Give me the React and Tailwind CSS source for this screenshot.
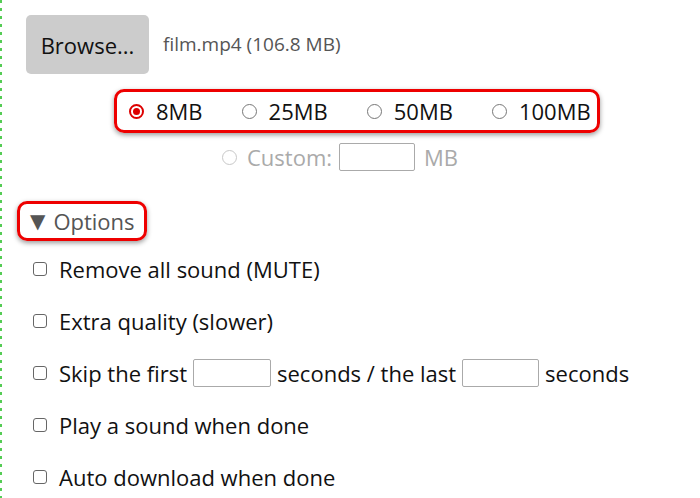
import React from "react";

function Radio({ checked, disabled }) {
  return (
    <span
      className={`inline-flex shrink-0 w-[15px] h-[15px] rounded-full items-center justify-center border ${
        checked ? "border-[#d00] border-2" : disabled ? "border-[#c8c8c8]" : "border-[#777]"
      } bg-white`}
    >
      {checked && <span className="w-[7px] h-[7px] rounded-full bg-[#d00]" />}
    </span>
  );
}

function Check() {
  return <span className="inline-block shrink-0 w-[14px] h-[14px] rounded-[3px] border border-[#666] bg-white" />;
}

function Input({ w }) {
  return <span className={`inline-block shrink-0 ${w} h-[28px] border border-[#aaa] rounded-[2px] bg-white`} />;
}

export default function App() {
  return (
    <div
      className="w-[700px] h-[498px] bg-white overflow-hidden flex text-[22px] text-[#111] leading-none"
      style={{ fontFamily: '"Open Sans", sans-serif' }}
    >
      <div className="w-[2px] shrink-0 h-full bg-[repeating-linear-gradient(to_bottom,#5c5_0_3px,transparent_3px_8px)]" />
      <div className="flex-1">
        <div className="flex items-center pt-[15px] pl-[24px]">
          <div className="w-[123px] h-[59px] bg-[#ccc] rounded-[5px] flex items-center justify-center text-[22px] text-[#111]">
            Browse...
          </div>
          <span className="ml-[14px] text-[19px] text-[#555]">film.mp4 (106.8 MB)</span>
        </div>

        <div className="flex mt-[15px] pl-[112px]">
          <div className="flex items-center h-[44px] w-[486px] border-[3px] border-[#e00] rounded-[10px] shadow-[0_2px_5px_rgba(0,0,0,0.4)] pl-[12px] gap-[12px]">
            <Radio checked />
            <span className="mr-[27px]">8MB</span>
            <Radio />
            <span className="mr-[27px]">25MB</span>
            <Radio />
            <span className="mr-[27px]">50MB</span>
            <Radio />
            <span>100MB</span>
          </div>
        </div>

        <div className="flex items-center mt-[10px] pl-[220px] text-[#aaa]">
          <Radio disabled />
          <span className="ml-[10px] mr-[7px]">Custom:</span>
          <Input w="w-[76px]" />
          <span className="ml-[9px]">MB</span>
        </div>

        <div className="pl-[15px] mt-[30px]">
          <div className="inline-flex items-center h-[40px] pl-[10px] pr-[9px] border-[3px] border-[#e00] rounded-[10px] shadow-[0_2px_5px_rgba(0,0,0,0.4)] text-[#555]">
            <span className="text-[20px] mr-[8px]" style={{ fontFamily: '"DejaVu Sans", sans-serif' }}>▼</span>Options
          </div>
        </div>

        <div className="pl-[31px] mt-[2px] flex flex-col">
          <div className="flex items-center h-[52px] gap-[12px]">
            <Check />
            <span>Remove all sound (MUTE)</span>
          </div>
          <div className="flex items-center h-[52px] gap-[12px]">
            <Check />
            <span>Extra quality (slower)</span>
          </div>
          <div className="flex items-center h-[52px] gap-[12px]">
            <Check />
            <span className="flex items-center gap-[6px]">
              Skip the first <Input w="w-[78px]" /> seconds / the last <Input w="w-[77px]" /> seconds
            </span>
          </div>
          <div className="flex items-center h-[52px] gap-[12px]">
            <Check />
            <span>Play a sound when done</span>
          </div>
          <div className="flex items-center h-[52px] gap-[12px]">
            <Check />
            <span>Auto download when done</span>
          </div>
        </div>
      </div>
    </div>
  );
}
